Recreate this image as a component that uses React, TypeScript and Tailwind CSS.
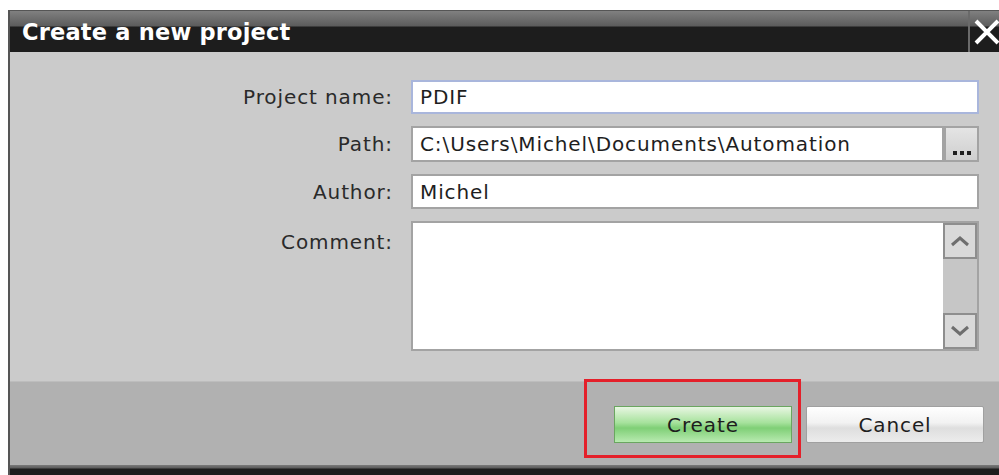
import React from "react";

const FONT = { fontFamily: '"DejaVu Sans", "Noto Sans", sans-serif' };

function Field({ label, value, children }: { label: string; value?: string; children?: React.ReactNode }) {
  return (
    <div className="flex items-center">
      <div className="w-[401px] pr-[18px] text-right text-[20px] tracking-[0.9px] text-[#2a2a2a]">{label}</div>
      {children ?? (
        <div className="flex h-[35px] w-[568px] items-center border-2 border-[#a3a3a3] bg-white px-[7px] text-[20px] tracking-[0.9px] text-[#1e1e1e]">
          {value}
        </div>
      )}
    </div>
  );
}

function ScrollButton({ up }: { up?: boolean }) {
  return (
    <div className="flex h-[36px] w-full items-center justify-center border-2 border-[#8e8e8e] bg-[#d9d9d9]">
      <svg width="22" height="12" viewBox="0 0 22 12">
        <path
          d={up ? "M3 10 L11 3 L19 10" : "M3 2 L11 9 L19 2"}
          fill="none"
          stroke="#6e6e6e"
          strokeWidth="3"
        />
      </svg>
    </div>
  );
}

export default function App() {
  return (
    <div className="h-[475px] w-[999px] overflow-hidden bg-white pl-[8px] pt-[10px]" style={FONT}>
      <div className="w-[1000px] border-l-2 border-t border-[#555555]">
        {/* title bar */}
        <div className="flex h-[41px] bg-[linear-gradient(#808080_0px,#5c5c5c_15px,#1d1d1d_16px,#1d1d1d_100%)]">
          <div className="flex-1 pl-[12px] pt-[6px] text-[22.5px] font-bold leading-[30px] tracking-[0.2px] text-white">
            Create a new project
          </div>
          <div className="flex w-[40px] items-center border-l-2 border-[#6a6a6a] pl-[2px]">
            <svg width="30" height="30" viewBox="0 0 30 30">
              <path d="M4 4 L26 26 M26 4 L4 26" stroke="white" strokeWidth="4" />
            </svg>
          </div>
        </div>

        {/* form */}
        <div className="h-[329px] bg-[#cbcbcb] pt-[28px]">
          <div className="flex flex-col gap-[12px]">
            <Field label="Project name:">
              <div className="flex h-[34px] w-[568px] items-center border-2 border-[#a9b6dc] bg-white px-[7px] text-[20px] tracking-[0.9px] text-[#1e1e1e]">
                PDIF
              </div>
            </Field>
            <Field label="Path:">
              <div className="flex h-[36px] w-[568px]">
                <div className="flex flex-1 items-center border-2 border-[#a3a3a3] bg-white px-[7px] text-[20px] tracking-[0.9px] text-[#1e1e1e]">
                  C:\Users\Michel\Documents\Automation
                </div>
                <div className="flex w-[35px] items-end justify-center gap-[3px] border-2 border-[#a3a3a3] bg-[linear-gradient(#e4e4e4,#cfcfcf)] pb-[5px]">
                  <span className="h-[4px] w-[4px] bg-[#1e1e1e]" />
                  <span className="h-[4px] w-[4px] bg-[#1e1e1e]" />
                  <span className="h-[4px] w-[4px] bg-[#1e1e1e]" />
                </div>
              </div>
            </Field>
            <Field label="Author:" value="Michel" />
            <div className="flex items-start">
              <div className="w-[401px] pr-[18px] pt-[6px] text-right text-[20px] tracking-[0.9px] text-[#2a2a2a]">Comment:</div>
              <div className="flex h-[130px] w-[568px] border-2 border-[#a3a3a3] bg-white">
                <div className="flex-1" />
                <div className="flex w-[34px] flex-col justify-between bg-[#c6c6c6]">
                  <ScrollButton up />
                  <ScrollButton />
                </div>
              </div>
            </div>
          </div>
        </div>

        {/* footer */}
        <div className="flex h-[84px] items-start border-t border-[#bdbdbd] bg-[#b1b1b1] pl-[572px]">
          <div className="-mt-[3px] ml-[2px] flex h-[79px] w-[217px] items-end justify-end border-[3px] border-[#e4202a] pb-[12px] pr-[6px]">
            <div className="flex h-[37px] w-[178px] items-center justify-center border border-[#6aa660] bg-[linear-gradient(#e8f6e2,#a6e29c_45%,#7fcf76_60%,#b8eab0)] text-[20px] tracking-[0.9px] text-[#1e1e1e]">
              Create
            </div>
          </div>
          <div className="ml-[5px] mt-[24px] flex h-[37px] w-[178px] items-center justify-center rounded-[2px] border border-[#a0a0a0] bg-[linear-gradient(#ffffff,#f2f2f2_45%,#dedede_60%,#ececec)] text-[20px] tracking-[0.9px] text-[#1e1e1e]">
            Cancel
          </div>
        </div>

        {/* bottom edge */}
        <div className="h-[10px] bg-[linear-gradient(#7a7a7a_0px,#5c5c5c_3px,#1d1d1d_4px)]" />
      </div>
    </div>
  );
}
